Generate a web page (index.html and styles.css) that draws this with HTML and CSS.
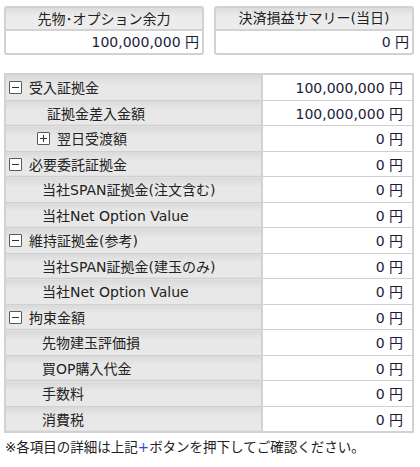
FILE: index.html
```html
<!DOCTYPE html>
<html lang="ja">

<head>
    <meta charset="UTF-8">
    <meta name="viewport" content="width=device-width, initial-scale=1.0">
    <title>証拠金</title>
    <link rel="stylesheet" href="styles.css">
</head>

<body>
<div class="wrap">
    <div class="summary">
        <div class="box">
            <div class="box-head">先物<span class="dot">･</span>オプション余力</div>
            <div class="box-val">100,000,000 円</div>
        </div>
        <div class="box">
            <div class="box-head">決済損益サマリー(当日)</div>
            <div class="box-val">0 円</div>
        </div>
    </div>

    <table class="margin">
        <colgroup>
            <col class="col-label">
            <col>
        </colgroup>
        <tr>
            <td class="label"><span class="tog minus"></span>受入証拠金</td>
            <td class="val">100,000,000 円</td>
        </tr>
        <tr>
            <td class="label sub sub-wide">証拠金差入金額</td>
            <td class="val">100,000,000 円</td>
        </tr>
        <tr>
            <td class="label sub-tog"><span class="tog plus-box"></span>翌日受渡額</td>
            <td class="val">0 円</td>
        </tr>
        <tr>
            <td class="label"><span class="tog minus"></span>必要委託証拠金</td>
            <td class="val">0 円</td>
        </tr>
        <tr>
            <td class="label sub">当社SPAN証拠金(注文含む)</td>
            <td class="val">0 円</td>
        </tr>
        <tr>
            <td class="label sub">当社Net Option Value</td>
            <td class="val">0 円</td>
        </tr>
        <tr>
            <td class="label"><span class="tog minus"></span>維持証拠金(参考)</td>
            <td class="val">0 円</td>
        </tr>
        <tr>
            <td class="label sub">当社SPAN証拠金(建玉のみ)</td>
            <td class="val">0 円</td>
        </tr>
        <tr>
            <td class="label sub">当社Net Option Value</td>
            <td class="val">0 円</td>
        </tr>
        <tr>
            <td class="label"><span class="tog minus"></span>拘束金額</td>
            <td class="val">0 円</td>
        </tr>
        <tr>
            <td class="label sub">先物建玉評価損</td>
            <td class="val">0 円</td>
        </tr>
        <tr>
            <td class="label sub">買OP購入代金</td>
            <td class="val">0 円</td>
        </tr>
        <tr>
            <td class="label sub">手数料</td>
            <td class="val">0 円</td>
        </tr>
        <tr>
            <td class="label sub">消費税</td>
            <td class="val">0 円</td>
        </tr>
    </table>
    <p class="note">※各項目の詳細は上記<span class="plus">+</span>ボタンを押下してご確認ください。</p>
</div>
</body>

</html>
```

FILE: styles.css
```css
body {
    margin: 0;
    font-family: "DejaVu Sans", "Noto Sans CJK JP", sans-serif;
    font-size: 14px;
    color: #333;
    background: #fff;
}

.wrap {
    padding: 6px 6px 0 4px;
}

.summary {
    display: flex;
    gap: 10px;
}

.box {
    width: 196px;
    border: 2px solid #d2d2d2;
    border-radius: 3px;
}

.box-head {
    height: 21px;
    line-height: 21px;
    text-align: center;
    background: linear-gradient(#dcdcdc, #ececec 40%, #ececec);
    border-bottom: 2px solid #d2d2d2;
    color: #222;
}

.dot {
    font-family: "Noto Sans CJK JP", sans-serif;
}

.box-val {
    height: 22px;
    line-height: 22px;
    text-align: right;
    padding-right: 3px;
    color: #1c1c3a;
}

.margin {
    margin-top: 18px;
    width: 410px;
    table-layout: fixed;
    border-collapse: collapse;
    border: 2px solid #d2d2d2;
}

.col-label {
    width: 257px;
}

.margin td {
    height: 24.5px;
    padding: 0;
    border-top: 1px solid #d0d0d0;
    white-space: nowrap;
}

.label {
    padding-left: 3px !important;
    background: linear-gradient(#d9d9d9, #e8e8e8 40%, #e8e8e8);
    border-right: 2px solid #d2d2d2;
    color: #222;
}

.label.sub {
    padding-left: 36px !important;
}

.label.sub-wide {
    padding-left: 41px !important;
}

.label.sub-tog {
    padding-left: 31px !important;
}

.tog {
    position: relative;
    display: inline-block;
    width: 11px;
    height: 11px;
    margin-right: 7px;
    border: 1px solid #5a5a5a;
    border-radius: 1px;
    background: #fff;
    vertical-align: -1px;
}

.tog::before,
.plus-box::after {
    content: "";
    position: absolute;
    left: 2px;
    top: 5px;
    width: 7px;
    height: 1px;
    background: #333;
}

.plus-box::after {
    left: 5px;
    top: 2px;
    width: 1px;
    height: 7px;
}

.val {
    text-align: right;
    padding-right: 9px !important;
    background: #fff;
    color: #1c1c3a;
}

.note {
    margin: 3px 0 0 1px;
    font-size: 13.5px;
    color: #222;
}

.plus {
    color: #2a4fd0;
}
```
